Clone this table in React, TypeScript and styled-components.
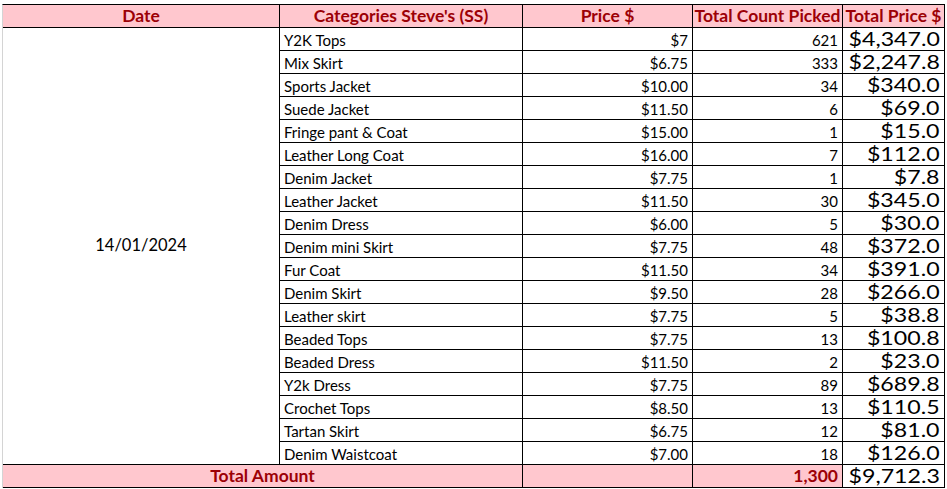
import React from "react";
import styled, { createGlobalStyle, css } from "styled-components";

const Global = createGlobalStyle`
  html, body { margin: 0; padding: 0; background: #ffffff; }
  body { font-family: "Lato", "Liberation Sans", sans-serif; color: #000; }
`;

const Sheet = styled.div`
  width: 947px;
  height: 489px;
  padding: 4px 0 0 2px;
  box-sizing: border-box;
  background: #fff;
`;

const Grid = styled.div`
  display: grid;
  grid-template-columns: 277px 243px 170px 150px 102px;
  grid-template-rows: 23px repeat(19, 23px) 23px;
  border-top: 1px solid #000;
  border-left: 1px solid #d4d4d4;
  width: max-content;
`;

type CellProps = {
  $align?: "left" | "right" | "center";
  $head?: boolean;
  $pink?: boolean;
  $big?: boolean;
  $bold?: boolean;
  $red?: boolean;
};

const Cell = styled.div<CellProps>`
  box-sizing: border-box;
  border-right: 1px solid #000;
  border-bottom: 1px solid #000;
  display: flex;
  align-items: flex-end;
  padding: 0 4px 0 4px;
  font-size: 15px;
  line-height: 20px;
  white-space: nowrap;
  overflow: hidden;
  justify-content: ${(p) =>
    p.$align === "right" ? "flex-end" : p.$align === "center" ? "center" : "flex-start"};
  background: ${(p) => (p.$pink || p.$head ? "#ffc7ce" : "#fff")};
  color: ${(p) => (p.$red || p.$head ? "#9c0006" : "#000")};
  ${(p) =>
    (p.$bold || p.$head) &&
    css`
      font-weight: 700;
      font-size: 17.5px;
      align-items: center;
      padding-bottom: 0;
    `}
  ${(p) =>
    p.$big &&
    css`
      font-size: 19px;
      line-height: 22px;
      padding-right: 4px;
    `}
`;

const BigValue = styled.span`
  display: inline-block;
  transform: scaleX(1.22);
  transform-origin: right center;
`;

const DateCell = styled(Cell)`
  grid-row: span 19;
  align-items: center;
  justify-content: center;
  font-size: 16.5px;
  padding-bottom: 2px;
`;

const TotalLabel = styled(Cell)`
  grid-column: span 2;
  justify-content: center;
`;

const rows: [string, string, string, string][] = [
  ["Y2K Tops", "$7", "621", "$4,347.0"],
  ["Mix Skirt", "$6.75", "333", "$2,247.8"],
  ["Sports Jacket", "$10.00", "34", "$340.0"],
  ["Suede Jacket", "$11.50", "6", "$69.0"],
  ["Fringe pant & Coat", "$15.00", "1", "$15.0"],
  ["Leather Long Coat", "$16.00", "7", "$112.0"],
  ["Denim Jacket", "$7.75", "1", "$7.8"],
  ["Leather Jacket", "$11.50", "30", "$345.0"],
  ["Denim Dress", "$6.00", "5", "$30.0"],
  ["Denim mini Skirt", "$7.75", "48", "$372.0"],
  ["Fur Coat", "$11.50", "34", "$391.0"],
  ["Denim Skirt", "$9.50", "28", "$266.0"],
  ["Leather skirt", "$7.75", "5", "$38.8"],
  ["Beaded Tops", "$7.75", "13", "$100.8"],
  ["Beaded Dress", "$11.50", "2", "$23.0"],
  ["Y2k Dress", "$7.75", "89", "$689.8"],
  ["Crochet Tops", "$8.50", "13", "$110.5"],
  ["Tartan Skirt", "$6.75", "12", "$81.0"],
  ["Denim Waistcoat", "$7.00", "18", "$126.0"],
];

export default function App() {
  return (
    <>
      <Global />
      <Sheet>
        <Grid>
          <Cell $head $align="center">Date</Cell>
          <Cell $head $align="center">Categories Steve's (SS)</Cell>
          <Cell $head $align="center">Price $</Cell>
          <Cell $head $align="center">Total Count Picked</Cell>
          <Cell $head $align="center">Total Price $</Cell>
          {rows.map((r, i) => (
            <React.Fragment key={r[0]}>
              {i === 0 && <DateCell>14/01/2024</DateCell>}
              <Cell>{r[0]}</Cell>
              <Cell $align="right">{r[1]}</Cell>
              <Cell $align="right">{r[2]}</Cell>
              <Cell $align="right" $big>
                <BigValue>{r[3]}</BigValue>
              </Cell>
            </React.Fragment>
          ))}
          <TotalLabel $pink $bold $red>Total Amount</TotalLabel>
          <Cell $pink />
          <Cell $pink $bold $red $align="right">1,300</Cell>
          <Cell $align="right" $big>
            <BigValue>$9,712.3</BigValue>
          </Cell>
        </Grid>
      </Sheet>
    </>
  );
}
